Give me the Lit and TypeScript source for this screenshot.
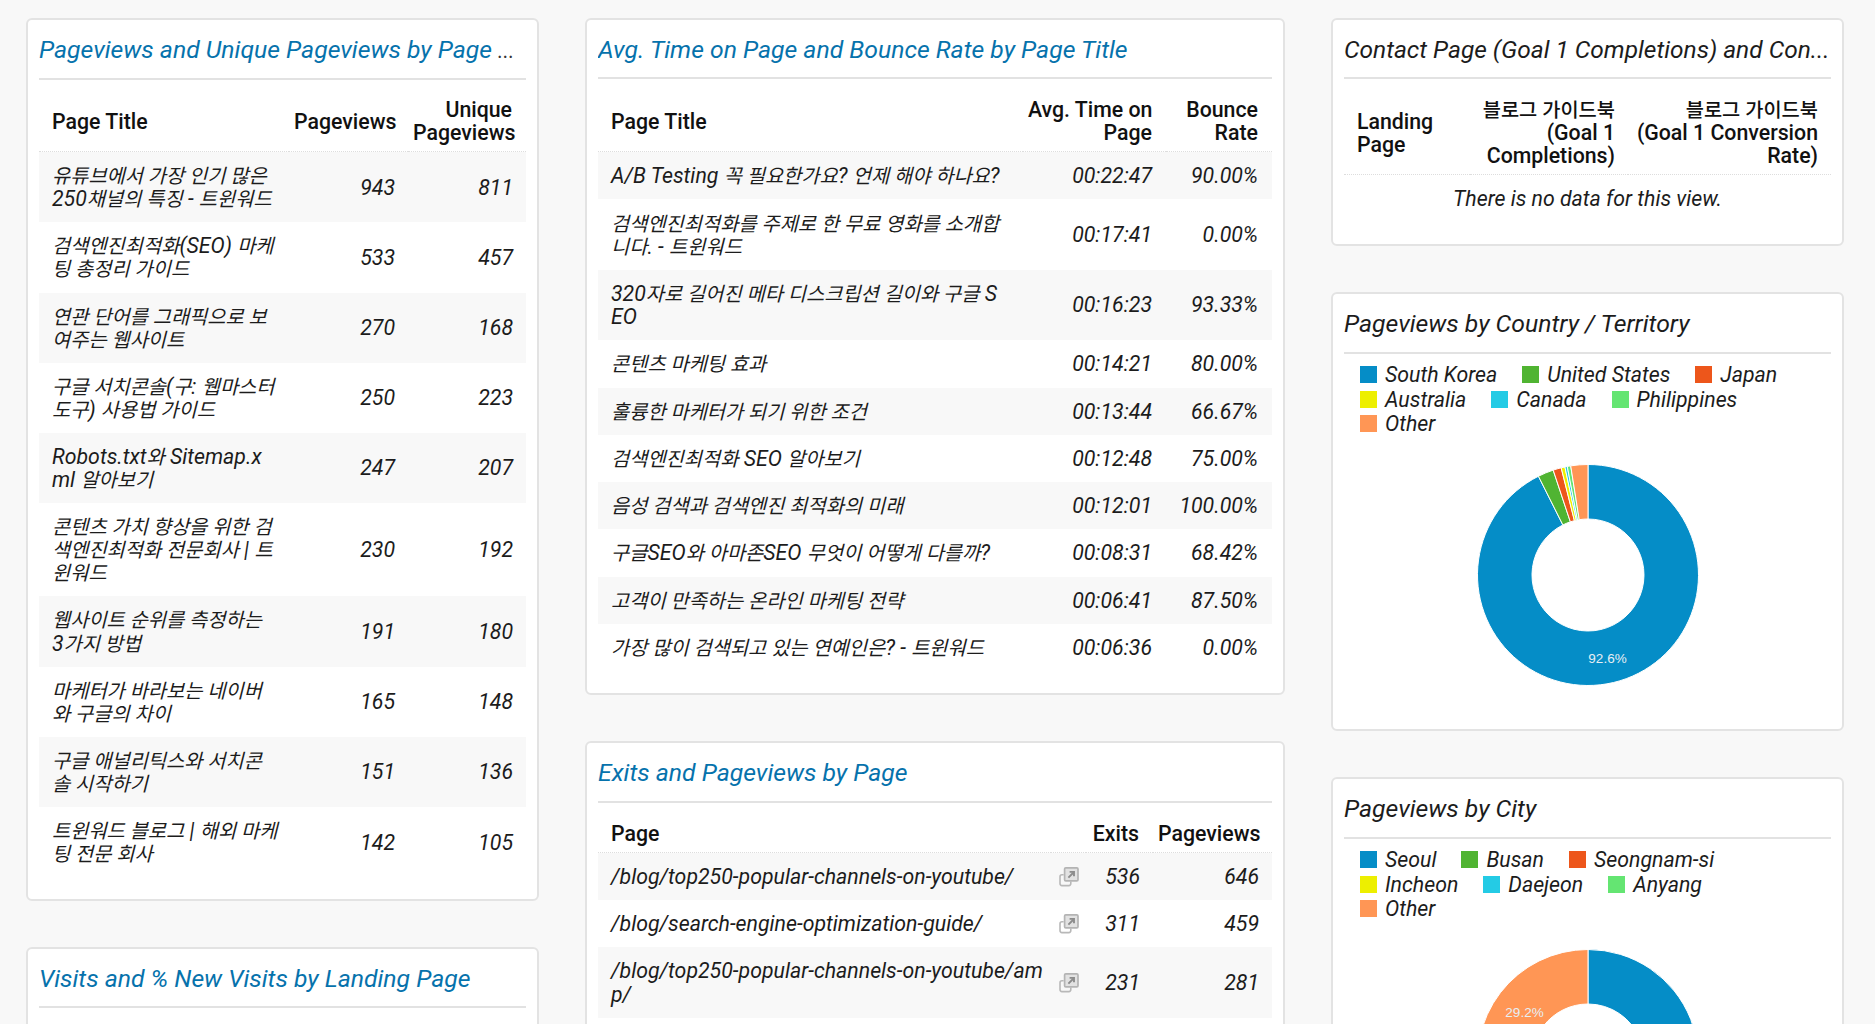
import { LitElement, html, css, svg } from "lit";
import { customElement } from "lit/decorators.js";

const COLORS = ["#058dc7", "#50b432", "#ed561b", "#edef00", "#24cbe5", "#64e572", "#ff9655"];

const HANGUL = /([\uac00-\ud7a3]+(?: [\uac00-\ud7a3]+)*)/;
const ko = (l: string) =>
  l.split(HANGUL).map((part, i) => (i % 2 ? html`<span class="ko">${part}</span>` : part));
const lines = (t: string) => t.split("\n").map((l, i) => (i ? html`<br />${ko(l)}` : ko(l)));

function donut(parts: number[]) {
  const c = 111, R = 110.5, r = 56;
  let a = 0;
  const p = (rad: number, deg: number) => {
    const t = (deg * Math.PI) / 180;
    return `${(c + rad * Math.sin(t)).toFixed(2)} ${(c - rad * Math.cos(t)).toFixed(2)}`;
  };
  return parts.map((v, i) => {
    const s = a, e = a + (v * 360) / 100;
    a = e;
    const large = e - s > 180 ? 1 : 0;
    return svg`<path d="M${p(R, s)} A${R} ${R} 0 ${large} 1 ${p(R, e)} L${p(r, e)} A${r} ${r} 0 ${large} 0 ${p(r, s)} Z" fill="${COLORS[i]}" stroke="#fff" stroke-width="1" />`;
  });
}

const pageviews: [string, string, string][] = [
  ["유튜브에서 가장 인기 많은\n250채널의 특징 - 트윈워드", "943", "811"],
  ["검색엔진최적화(SEO) 마케\n팅 총정리 가이드", "533", "457"],
  ["연관 단어를 그래픽으로 보\n여주는 웹사이트", "270", "168"],
  ["구글 서치콘솔(구: 웹마스터\n도구) 사용법 가이드", "250", "223"],
  ["Robots.txt와 Sitemap.x\nml 알아보기", "247", "207"],
  ["콘텐츠 가치 향상을 위한 검\n색엔진최적화 전문회사 | 트\n윈워드", "230", "192"],
  ["웹사이트 순위를 측정하는\n3가지 방법", "191", "180"],
  ["마케터가 바라보는 네이버\n와 구글의 차이", "165", "148"],
  ["구글 애널리틱스와 서치콘\n솔 시작하기", "151", "136"],
  ["트윈워드 블로그 | 해외 마케\n팅 전문 회사", "142", "105"],
];

const times: [string, string, string][] = [
  ["A/B Testing 꼭 필요한가요? 언제 해야 하나요?", "00:22:47", "90.00%"],
  ["검색엔진최적화를 주제로 한 무료 영화를 소개합\n니다. - 트윈워드", "00:17:41", "0.00%"],
  ["320자로 길어진 메타 디스크립션 길이와 구글 S\nEO", "00:16:23", "93.33%"],
  ["콘텐츠 마케팅 효과", "00:14:21", "80.00%"],
  ["훌륭한 마케터가 되기 위한 조건", "00:13:44", "66.67%"],
  ["검색엔진최적화 SEO 알아보기", "00:12:48", "75.00%"],
  ["음성 검색과 검색엔진 최적화의 미래", "00:12:01", "100.00%"],
  ["구글SEO와 아마존SEO 무엇이 어떻게 다를까?", "00:08:31", "68.42%"],
  ["고객이 만족하는 온라인 마케팅 전략", "00:06:41", "87.50%"],
  ["가장 많이 검색되고 있는 연예인은? - 트윈워드", "00:06:36", "0.00%"],
];

const exits: [string, string, string][] = [
  ["/blog/top250-popular-channels-on-youtube/", "536", "646"],
  ["/blog/search-engine-optimization-guide/", "311", "459"],
  ["/blog/top250-popular-channels-on-youtube/am\np/", "231", "281"],
];

const legend = (rows: string[][]) => {
  let i = 0;
  return html`<div class="legend">
    ${rows.map(
      (row) => html`<div class="legend-row">
        ${row.map((name) => {
          const color = COLORS[i++];
          return html`<span class="item"><i class="swatch" style="background:${color}"></i>${name}</span>`;
        })}
      </div>`
    )}
  </div>`;
};

const linkIcon = html`<svg class="link" width="20" height="20" viewBox="0 0 20 20">
  <path d="M4.6 7.8 H3 A2 2 0 0 0 1 9.8 V16.6 A2 2 0 0 0 3 18.6 H9.8 A2 2 0 0 0 11.8 16.6 V14.6" fill="none" stroke="#b8b8b8" stroke-width="1.6" />
  <rect x="5.6" y="0.9" width="13.4" height="13" rx="1.2" fill="#e2e2e2" stroke="#b4b4b4" stroke-width="1.7" />
  <path d="M9.4 10.6 L14 6 M10.6 4.9 H15 V9.3" fill="none" stroke="#8c8c8c" stroke-width="1.9" />
</svg>`;

@customElement("app-root")
export class AppRoot extends LitElement {
  static styles = css`
    :host {
      display: block;
      height: 1024px;
      overflow: hidden;
      background: #f8f8f8;
      font-family: Roboto, "Noto Sans CJK KR", sans-serif;
      font-size: 21.3px;
      line-height: 23.1px;
      color: #1c1c1c;
    }
    .ko {
      font-size: 19.8px;
      line-height: 0;
    }
    .page {
      display: grid;
      grid-template-columns: 513px 700px 513px;
      column-gap: 46px;
      padding: 18px 31px 0 26px;
      align-items: start;
    }
    .col {
      display: flex;
      flex-direction: column;
      gap: 46px;
    }
    .card {
      background: #fff;
      border: 2px solid #e3e3e3;
      border-radius: 6px;
      padding: 0 11px 22px;
    }
    .title {
      font-size: 24.75px;
      line-height: 28px;
      font-style: italic;
      font-weight: 400;
      padding: 16px 0 13px;
      border-bottom: 2px solid #e2e2e2;
      white-space: nowrap;
      overflow: hidden;
      color: #1c1c1c;
    }
    .title.blue {
      color: #0672ac;
    }
    .title.tall {
      padding-bottom: 14px;
    }
    .title.fit {
      font-size: 24.5px;
    }
    .dots {
      font-size: 21.3px;
      color: #333;
    }
    table {
      width: 100%;
      table-layout: fixed;
      border-collapse: collapse;
      margin-top: 11px;
      font-style: italic;
    }
    table.low {
      margin-top: 12px;
    }
    th,
    td {
      box-sizing: border-box;
      white-space: nowrap;
    }
    th {
      font-style: normal;
      font-weight: 500;
      padding: 7px 14px 7px 5px;
      text-align: right;
      vertical-align: middle;
      color: #111;
      border-bottom: 1px dotted #ddd;
    }
    table.head13 th {
      padding-right: 13px;
    }
    td {
      padding: 12px 13px 12px 5px;
      text-align: right;
      vertical-align: middle;
    }
    table.wide td {
      padding: 12.1px 14px 12.1px 5px;
    }
    th.l,
    td.l,
    table.wide td.l {
      text-align: left;
      padding-left: 13px;
    }
    tbody tr:nth-child(odd) td {
      background: #f8f8f8;
    }
    td.empty {
      text-align: center;
      background: #fff !important;
      padding-left: 13px;
    }
    td.ic {
      padding: 0 0 0 8px;
      text-align: left;
    }
    .link {
      display: block;
    }
    .w-a2 { width: 119px; }
    .w-a3 { width: 118px; }
    .w-b2 { width: 143px; }
    .w-b3 { width: 106px; }
    .w-c2 { width: 35px; }
    .w-c3 { width: 67px; }
    .w-c4 { width: 119px; }
    .w-d2 { width: 158px; }
    .w-d3 { width: 203px; }
    .legend {
      padding: 9px 0 0 16px;
      display: flex;
      flex-direction: column;
      gap: 1.3px;
      font-style: italic;
    }
    .legend-row {
      display: flex;
      gap: 25px;
    }
    .item {
      display: flex;
      align-items: center;
      gap: 8px;
    }
    .swatch {
      width: 17px;
      height: 17px;
      flex: none;
    }
    .chart {
      position: relative;
      width: 222px;
      height: 222px;
      margin: 29px auto 21px;
    }
    .chart svg {
      display: block;
    }
    .pct {
      position: absolute;
      font: 13.5px "Liberation Sans", sans-serif;
      color: #e8eff4;
      transform: translate(-50%, -50%);
    }
    .p2 { left: 131px; top: 194px; }
    .p3 { left: 48px; top: 63px; }
  `;

  render() {
    return html`<div class="page">
      <div class="col">
        <section class="card">
          <div class="title blue">Pageviews and Unique Pageviews by Page <span class="dots">...</span></div>
          <table>
            <thead>
              <tr>
                <th class="l">Page Title</th>
                <th class="w-a2">Pageviews</th>
                <th class="w-a3">Unique<br />Pageviews</th>
              </tr>
            </thead>
            <tbody>
              ${pageviews.map(
                (r) => html`<tr><td class="l">${lines(r[0])}</td><td>${r[1]}</td><td>${r[2]}</td></tr>`
              )}
            </tbody>
          </table>
        </section>
        <section class="card">
          <div class="title blue">Visits and % New Visits by Landing Page</div>
        </section>
      </div>

      <div class="col">
        <section class="card">
          <div class="title blue">Avg. Time on Page and Bounce Rate by Page Title</div>
          <table class="low wide">
            <thead>
              <tr>
                <th class="l">Page Title</th>
                <th class="w-b2">Avg. Time on<br />Page</th>
                <th class="w-b3">Bounce<br />Rate</th>
              </tr>
            </thead>
            <tbody>
              ${times.map(
                (r) => html`<tr><td class="l">${lines(r[0])}</td><td>${r[1]}</td><td>${r[2]}</td></tr>`
              )}
            </tbody>
          </table>
        </section>
        <section class="card">
          <div class="title blue tall">Exits and Pageviews by Page</div>
          <table class="low">
            <thead>
              <tr>
                <th class="l">Page</th>
                <th class="w-c2"></th>
                <th class="w-c3">Exits</th>
                <th class="w-c4">Pageviews</th>
              </tr>
            </thead>
            <tbody>
              ${exits.map(
                (r) => html`<tr>
                  <td class="l">${lines(r[0])}</td>
                  <td class="ic">${linkIcon}</td>
                  <td>${r[1]}</td>
                  <td>${r[2]}</td>
                </tr>`
              )}
            </tbody>
          </table>
        </section>
      </div>

      <div class="col">
        <section class="card">
          <div class="title fit">Contact Page (Goal 1 Completions) and Con...</div>
          <table class="low head13">
            <thead>
              <tr>
                <th class="l">Landing<br />Page</th>
                <th class="w-d2">${lines("블로그 가이드북\n(Goal 1\nCompletions)")}</th>
                <th class="w-d3">${lines("블로그 가이드북\n(Goal 1 Conversion\nRate)")}</th>
              </tr>
            </thead>
            <tbody>
              <tr><td class="empty" colspan="3">There is no data for this view.</td></tr>
            </tbody>
          </table>
        </section>
        <section class="card">
          <div class="title tall">Pageviews by Country / Territory</div>
          ${legend([["South Korea", "United States", "Japan"], ["Australia", "Canada", "Philippines"], ["Other"]])}
          <div class="chart">
            <svg width="222" height="222" viewBox="0 0 222 222">${donut([92.6, 2.3, 1.2, 0.55, 0.35, 0.5, 2.5])}</svg>
            <span class="pct p2">92.6%</span>
          </div>
        </section>
        <section class="card">
          <div class="title tall">Pageviews by City</div>
          ${legend([["Seoul", "Busan", "Seongnam-si"], ["Incheon", "Daejeon", "Anyang"], ["Other"]])}
          <div class="chart">
            <svg width="222" height="222" viewBox="0 0 222 222">${donut([38, 12, 8, 6, 4, 2.8, 29.2])}</svg>
            <span class="pct p3">29.2%</span>
          </div>
        </section>
      </div>
    </div>`;
  }
}
